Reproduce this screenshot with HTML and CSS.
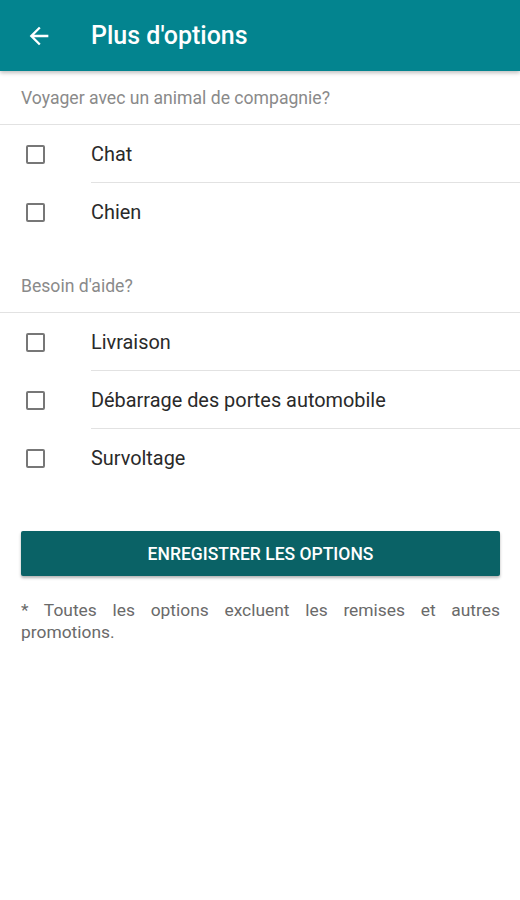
FILE: index.html
```html
<!DOCTYPE html>
<html lang="fr">
<head>
<meta charset="utf-8">
<title>Plus d'options</title>
<link rel="stylesheet" href="styles.css">
</head>
<body>
<header class="appbar">
  <svg class="back" width="28" height="28" viewBox="0 0 24 24"><path d="M20 11H7.83l5.59-5.59L12 4l-8 8 8 8 1.41-1.41L7.83 13H20v-2z" fill="#fff"/></svg>
  <h1 class="title">Plus d'options</h1>
</header>
<main>
  <section class="group">
    <div class="group-title">Voyager avec un animal de compagnie?</div>
    <div class="row"><span class="box"></span><span class="label">Chat</span></div>
    <div class="row"><span class="box"></span><span class="label">Chien</span></div>
  </section>
  <section class="group second">
    <div class="group-title">Besoin d'aide?</div>
    <div class="row"><span class="box"></span><span class="label">Livraison</span></div>
    <div class="row"><span class="box"></span><span class="label">Débarrage des portes automobile</span></div>
    <div class="row"><span class="box"></span><span class="label">Survoltage</span></div>
  </section>
  <div class="actions">
    <button class="save">ENREGISTRER LES OPTIONS</button>
    <p class="note">* Toutes les options excluent les remises et autres promotions.</p>
  </div>
</main>
</body>
</html>
```
FILE: styles.css
```css
* { box-sizing: border-box; }
html, body { margin: 0; padding: 0; background: #fff; }
body { font-family: Roboto, "Noto Sans", sans-serif; width: 520px; }
.appbar {
  height: 71px;
  background: #03848f;
  display: flex;
  align-items: center;
  padding-left: 25px;
  box-shadow: 0 2px 4px rgba(0,0,0,0.25);
  position: relative;
}
.back { width: 28px; height: 28px; flex: none; }
.title {
  margin: 0 0 0 38px;
  color: #fff;
  font-size: 25px;
  font-weight: 500;
}
.group-title {
  height: 54px;
  display: flex;
  align-items: center;
  padding-left: 21px;
  font-size: 17.6px;
  color: #8a8a8a;
  border-bottom: 1px solid #e2e2e2;
}
.second { margin-top: 18px; }
.row {
  height: 58px;
  display: flex;
  align-items: center;
  position: relative;
}
.row + .row::before {
  content: "";
  position: absolute;
  left: 91px; right: 0; top: -1px;
  border-top: 1px solid #e2e2e2;
}
.box {
  width: 19px; height: 19px;
  border: 2px solid #777;
  border-radius: 2px;
  margin-left: 26px;
  flex: none;
}
.label {
  margin-left: 46px;
  font-size: 19.9px;
  color: #2a2a2a;
}
.actions { padding: 44px 20px 0 21px; }
.save {
  display: block;
  width: 479px;
  height: 45px;
  border: 0;
  border-radius: 2px;
  background: #0a6266;
  color: #fff;
  font-family: Roboto, sans-serif;
  font-weight: 500;
  font-size: 17.5px;
  box-shadow: 0 2px 3px rgba(0,0,0,0.3);
}
.note {
  margin: 23px 0 0;
  width: 479px;
  font-size: 17.4px;
  line-height: 22px;
  color: #6a6a6a;
  text-align: justify;
}
```
